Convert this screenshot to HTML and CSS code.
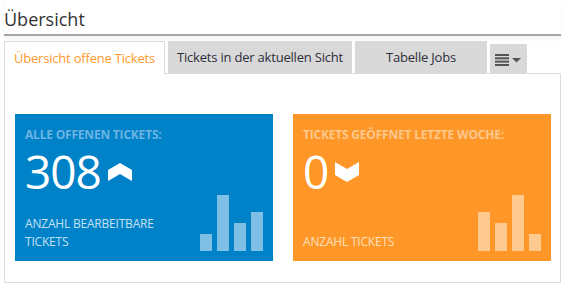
FILE: index.html
```html
<!DOCTYPE html>
<html lang="de">
<head>
    <meta charset="UTF-8">
    <title>Übersicht</title>
    <link rel="stylesheet" href="styles.css">
</head>
<body>
    <div class="page">
        <h1 class="page-title">Übersicht</h1>
        <div class="tabs">
            <div class="tab tab-active tab-overview">Übersicht offene Tickets</div>
            <div class="tab tab-view">Tickets in der aktuellen Sicht</div>
            <div class="tab tab-jobs">Tabelle Jobs</div>
            <div class="tab tab-menu">
                <svg width="27" height="12" viewBox="0 0 27 12">
                    <rect x="0" y="0" width="14" height="2" fill="#555"/>
                    <rect x="0" y="3.3" width="14" height="2" fill="#555"/>
                    <rect x="0" y="6.6" width="14" height="2" fill="#555"/>
                    <rect x="0" y="10" width="14" height="2" fill="#555"/>
                    <polygon points="17,4 26,4 21.5,8.5" fill="#555"/>
                </svg>
            </div>
        </div>
        <div class="panel">
            <div class="card card-blue">
                <div class="card-label">Alle offenen Tickets:</div>
                <div class="card-value">
                    <span>308</span>
                    <svg class="trend" width="24" height="19" viewBox="0 0 24 19">
                        <polygon points="0,7 12,0 24,7 24,18 12,11 0,18" fill="#fff"/>
                    </svg>
                </div>
                <div class="card-bottom">
                    <div class="card-foot">Anzahl bearbeitbare<br>Tickets</div>
                    <div class="bars">
                        <div class="bar" style="height: 17px"></div>
                        <div class="bar" style="height: 56px"></div>
                        <div class="bar" style="height: 28px"></div>
                        <div class="bar" style="height: 39px"></div>
                    </div>
                </div>
            </div>
            <div class="card card-orange">
                <div class="card-label">Tickets geöffnet letzte Woche:</div>
                <div class="card-value">
                    <span>0</span>
                    <svg class="trend" width="24" height="21" viewBox="0 0 24 21">
                        <polygon points="0,0 12,7 24,0 24,13 12,20 0,13" fill="#fff"/>
                    </svg>
                </div>
                <div class="card-bottom">
                    <div class="card-foot">Anzahl Tickets</div>
                    <div class="bars">
                        <div class="bar" style="height: 39px"></div>
                        <div class="bar" style="height: 28px"></div>
                        <div class="bar" style="height: 56px"></div>
                        <div class="bar" style="height: 17px"></div>
                    </div>
                </div>
            </div>
        </div>
    </div>
</body>
</html>
```

FILE: styles.css
```css
body {
    margin: 0;
    font-family: "Open Sans", Arial, sans-serif;
    color: #333;
    background: #fff;
}
.page {
    width: 557px;
    padding: 0 0 0 4px;
}
.page-title {
    margin: 0;
    padding: 6px 0 0 0;
    height: 28px;
    font-size: 18px;
    font-weight: 400;
    line-height: 26px;
    color: #333;
    border-bottom: 2px solid #a6a6a6;
    box-shadow: 0 3px 4px rgba(0, 0, 0, 0.05);
}
.tabs {
    display: flex;
    align-items: flex-end;
    gap: 3px;
    margin-top: 5px;
    height: 32px;
}
.tab {
    box-sizing: border-box;
    height: 32px;
    display: flex;
    align-items: center;
    justify-content: center;
    font-size: 13px;
    color: #2e2e3a;
    background: #d9d9d9;
    letter-spacing: -0.2px;
}
.tab-active {
    background: #fff;
    color: #ff9a2e;
    border: 1px solid #dcdcdc;
    border-bottom: none;
    position: relative;
    z-index: 1;
    height: 33px;
    margin-bottom: -1px;
}
.tab-overview { width: 161px; }
.tab-view { width: 184px; }
.tab-jobs { width: 132px; }
.tab-menu {
    width: 37px;
    height: 29px;
    padding-top: 2px;
}
.panel {
    box-sizing: border-box;
    width: 557px;
    height: 210px;
    border: 1px solid #dcdcdc;
    padding: 40px 9px 20px 10px;
    display: flex;
    gap: 20px;
}
.card {
    box-sizing: border-box;
    width: 258px;
    height: 147px;
    padding: 10px;
    display: flex;
    flex-direction: column;
    color: #fff;
}
.card-blue { background: #0082c8; }
.card-orange { background: #fe9727; }
.card-label {
    font-size: 12px;
    font-weight: 700;
    text-transform: uppercase;
    line-height: 16px;
    margin-top: 3px;
    letter-spacing: -0.2px;
    white-space: nowrap;
}
.card-blue .card-label { color: #6bb4e3; }
.card-orange .card-label { color: #ffc88c; }
.card-value {
    display: flex;
    align-items: center;
    gap: 7px;
    font-size: 46px;
    line-height: 48px;
    margin-top: 4px;
    letter-spacing: -1px;
}
.trend { margin-top: 2px; }
.card-bottom {
    margin-top: auto;
    display: flex;
    justify-content: space-between;
    align-items: flex-end;
}
.card-foot {
    font-size: 12px;
    line-height: 18px;
    text-transform: uppercase;
    letter-spacing: -0.2px;
}
.card-blue .card-foot { color: #c4e1f4; }
.card-orange .card-foot { color: #ffe0bd; }
.bars {
    display: flex;
    align-items: flex-end;
    gap: 5px;
}
.bar {
    width: 12px;
}
.card-blue .bar { background: #7fbfe6; }
.card-orange .bar { background: #ffca8f; }
```
